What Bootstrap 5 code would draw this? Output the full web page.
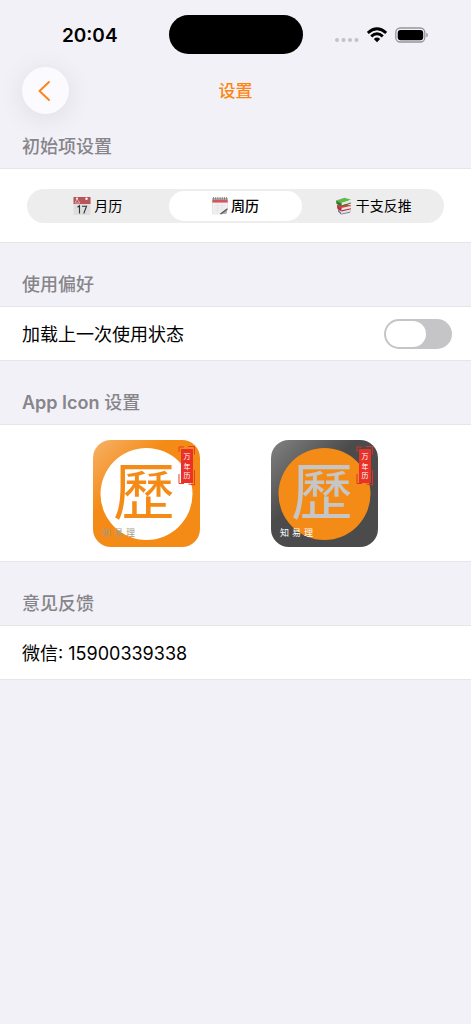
<!DOCTYPE html>
<html lang="zh-CN">
<head>
<meta charset="utf-8">
<meta name="viewport" content="width=device-width, initial-scale=1">
<title>设置</title>
<link href="https://cdn.jsdelivr.net/npm/bootstrap@5.3.0/dist/css/bootstrap.min.css" rel="stylesheet">
<style>
  body { background: #f2f1f7; color: #000; font-family: Inter, "Noto Sans CJK SC", sans-serif; font-size: 18px; line-height: 27px; }
  .status-bar { height: 67px; padding: 15px 0 12px; }
  .status-side { flex: 1 1 0; height: 40px; }
  .status-side.is-time { padding-left: 11px; font-size: 19px; font-weight: 600; }
  .status-side.is-icons { padding-right: 11px; gap: 8px; }
  .island { width: 134px; height: 39px; background: #000; }
  .title-bar { display: grid; grid-template-columns: 1fr auto 1fr; padding: 0 22px; }
  .title-bar h1 { font-size: 17px; line-height: 27px; padding-top: 2px; font-weight: 500; color: #ff840f; }
  .back { width: 47px; height: 47px; background: #fbfaff; color: #ff8420; border: 0; box-shadow: 0 4px 28px rgba(0,0,0,.09); }
  .group-title { font-size: 18px; line-height: 27px; font-weight: 500; color: #86858a; margin: 0; padding: 28px 22px 8px; }
  .group-title.is-first { padding-top: 19px; }
  .group-title .latin { font-weight: 600; }
  .panel { background: #fff; border: solid #e6e6e9; border-width: 1px 0; }
  .line-row { min-height: 53px; padding: 1px 19px 0 22px; }
  .segments { margin: 20px 27px 19px; height: 34px; padding: 2px; background: #ededee; border-radius: 17px; }
  .segments label { flex: 1 1 0; margin: 0 2px; gap: 3px; border-radius: 15px; font-size: 14px; line-height: 20px; cursor: pointer; }
  .segments .btn-check:checked + label { background: #fff; font-weight: 500; }
  .toggle { appearance: none; width: 68px; height: 30px; margin: 0; padding: 2px; border-radius: 15px; background: #c5c5c7; }
  .toggle::before { content: ""; display: block; width: 40px; height: 26px; border-radius: 13px; background: #fff; }
  .toggle:checked { background: #ff8a14; }
  .toggle:checked::before { margin-left: auto; }
  .icon-list { padding: 15px 22px 14px; }
  .app-icon { width: 107px; height: 107px; padding: 0; border: 0; background: none; }
  .app-icon svg { font-family: "Noto Sans CJK TC", "Noto Sans CJK SC", sans-serif; }
</style>
</head>
<body>
<div class="status-bar d-flex">
  <div class="status-side is-time d-flex align-items-center justify-content-center">20:04</div>
  <div class="island rounded-pill"></div>
  <div class="status-side is-icons d-flex align-items-center justify-content-center">
    <svg width="24" height="16" viewBox="0 0 24 16" fill="#c3c2c8" aria-hidden="true"><circle cx="2" cy="13" r="2"/><circle cx="8.500" cy="13" r="2"/><circle cx="15" cy="13" r="2"/><circle cx="21.500" cy="13" r="2"/></svg>
    <svg width="20" height="16" viewBox="0 0 20 16" aria-hidden="true"><g fill="none" stroke="#000" stroke-width="2.800"><path d="M.8 5.900Q10-2.400 19.200 5.900"/><path d="M4.200 9.400Q10 4.200 15.800 9.400"/></g><path d="M6.800 11.900Q10 9 13.200 11.900L10 15.300Z"/></svg>
    <svg width="33" height="16" viewBox="0 0 33 16" aria-hidden="true"><rect x=".8" y="1" width="29" height="14" rx="4.500" fill="none" stroke="#96959a" stroke-width="1.300"/><rect x="2.700" y="3" width="25.500" height="10.200" rx="3"/><path d="M31.300 5.700q1.600.6 1.600 2.300t-1.600 2.300z" fill="#96959a"/></svg>
  </div>
</div>

<header class="title-bar align-items-center">
  <button type="button" class="back rounded-circle d-flex align-items-center justify-content-center p-0" aria-label="返回">
    <svg width="16" height="22" viewBox="0 0 16 22" fill="none" stroke="currentColor" stroke-width="2" stroke-linecap="round" stroke-linejoin="round"><path d="M11 2L1.500 11L11 20"/></svg>
  </button>
  <h1 class="mb-0">设置</h1>
</header>

<main>
  <h2 class="group-title is-first">初始项设置</h2>
  <section class="panel">
    <div class="segments d-flex" role="group" aria-label="初始项设置">
      <input class="btn-check" type="radio" name="start" id="month">
      <label for="month" class="d-flex align-items-center justify-content-center">
        <svg width="18" height="18" viewBox="0 0 18 18" aria-hidden="true"><path d="M.5 0h17v18H.5z" fill="#dededf"/><path d="M.5 0h17v7H.5z" fill="#b65458"/><path d="M2 6l2-4 3 4z" fill="none" stroke="#e5bdbe" stroke-width=".8"/><circle cx="4" cy="1.500" r="1" fill="#fff"/><circle cx="13.500" cy="1.800" r="1.200" fill="#fff"/><path d="M4.500 10.200l2-1.500V16.500M9 9.200h4.500L10.800 16.500" fill="none" stroke="#333" stroke-width="1.100"/></svg>
        <span>月历</span>
      </label>
      <input class="btn-check" type="radio" name="start" id="week" checked>
      <label for="week" class="d-flex align-items-center justify-content-center">
        <svg width="16" height="18" viewBox="0 0 16 18" aria-hidden="true"><path d="M.5 1h15v10.500L9.500 17H.5z" fill="#f1f1f2" stroke="#d4d4d6" stroke-width=".5"/><path d="M.3 1h15.400v2H.3z" fill="#b8b4b4"/><path d="M.3 3h15.400v2.600H.3z" fill="#d6575b"/><path d="M1.500 0v3M3.700 0v3M5.900 0v3M8.100 0v3M10.300 0v3M12.500 0v3M14.600 0v3" stroke="#777" stroke-width=".8"/><path d="M2 8.500h12M2 11h11M2 13.500h8M5.500 6.500V16M10 6.500v7" stroke="#dcdce2" stroke-width=".5"/><path d="M15.600 11.500L8 17.200l6.500-.4z" fill="#aaa"/><path d="M15.500 11.800L8.500 17" stroke="#555" stroke-width="1.300"/></svg>
        <span>周历</span>
      </label>
      <input class="btn-check" type="radio" name="start" id="reverse">
      <label for="reverse" class="d-flex align-items-center justify-content-center">
        <svg width="18" height="18" viewBox="-1 0 18 18" aria-hidden="true"><path d="M2 12l3 3.500 9.500-2.200-.5 2.500L5 17.500 2 14.500z" fill="#6c78a5"/><path d="M5 14.500l9-2v2.300l-9 2z" fill="#e4e2e5"/><path d="M1 8l9-1 5 1.500v1L5.500 12 1 10z" fill="#d34443"/><path d="M5.500 11l9-2v2.500l-9 2z" fill="#ede5e1"/><path d="M1 9l4.500 2.500v3L1.500 12z" fill="#b62d32"/><path d="M5.500 13.300l9.500-2v1l-9.500 2.200z" fill="#b62d32"/><path d="M0 3.500L8.500.8l6.700 2L5.500 6z" fill="#62b84b"/><path d="M5.500 6l9-3v2.500l-9 3z" fill="#e7eadf"/><path d="M0 3.500L5.500 6v3.500L.5 7z" fill="#347b32"/><path d="M5.500 8.600l9.500-3v1l-9.500 3z" fill="#347b32"/></svg>
        <span>干支反推</span>
      </label>
    </div>
  </section>

  <h2 class="group-title">使用偏好</h2>
  <section class="panel">
    <div class="line-row d-flex align-items-center justify-content-between">
      <label for="restore">加载上一次使用状态</label>
      <input class="toggle" type="checkbox" role="switch" id="restore">
    </div>
  </section>

  <h2 class="group-title"><span class="latin">App Icon</span> 设置</h2>
  <section class="panel icon-list d-flex justify-content-evenly">
    <button type="button" class="app-icon" aria-label="橙色图标">
      <svg class="d-block" width="107" height="107" viewBox="0 0 107 107">
        <defs><linearGradient id="orange" x1="0" y1="0" x2=".5" y2=".5"><stop offset="0" stop-color="#f7b269"/><stop offset=".7" stop-color="#f48b16"/></linearGradient></defs>
        <rect width="107" height="107" rx="18" fill="url(#orange)"/>
        <circle cx="53.500" cy="54" r="46" fill="#fff"/>
        <text x="51" y="75" font-size="62" text-anchor="middle" fill="#f48b16">歷</text>
        <path d="M86 12V7h5M95 6.500h6.500v8M101.500 30v15l-6-1M86 34v9.500h5" fill="none" stroke="#e83d25" stroke-width="1"/>
        <path d="M88 9h12v34H88z" fill="#eb3027"/>
        <g font-size="7" text-anchor="middle" fill="#fff"><text x="94" y="19">万</text><text x="94" y="29">年</text><text x="94" y="38">历</text></g>
        <text font-size="9" y="96" x="9 21 33" fill="#a79a87">知易理</text>
      </svg>
    </button>
    <button type="button" class="app-icon" aria-label="深色图标">
      <svg class="d-block" width="107" height="107" viewBox="0 0 107 107">
        <defs><linearGradient id="dark" x1="0" y1="0" x2=".5" y2=".5"><stop offset="0" stop-color="#828282"/><stop offset=".8" stop-color="#4b4b4b"/></linearGradient></defs>
        <rect width="107" height="107" rx="18" fill="url(#dark)"/>
        <circle cx="53.500" cy="54" r="46" fill="#f48b16"/>
        <text x="51" y="75" font-size="62" text-anchor="middle" fill="#c6c6c6">歷</text>
        <path d="M86 12V7h5M95 6.500h6.500v8M101.500 30v15l-6-1M86 34v9.500h5" fill="none" stroke="#d83427" stroke-width="1"/>
        <path d="M88 9h12v34H88z" fill="#eb3027"/>
        <g font-size="7" text-anchor="middle" fill="#fff"><text x="94" y="19">万</text><text x="94" y="29">年</text><text x="94" y="38">历</text></g>
        <text font-size="9" y="96" x="9 21 33" fill="#fff">知易理</text>
      </svg>
    </button>
  </section>

  <h2 class="group-title">意见反馈</h2>
  <section class="panel">
    <div class="line-row d-flex align-items-center">微信: 15900339338</div>
  </section>
</main>
<script src="https://cdn.jsdelivr.net/npm/bootstrap@5.3.0/dist/js/bootstrap.bundle.min.js"></script>
</body>
</html>
